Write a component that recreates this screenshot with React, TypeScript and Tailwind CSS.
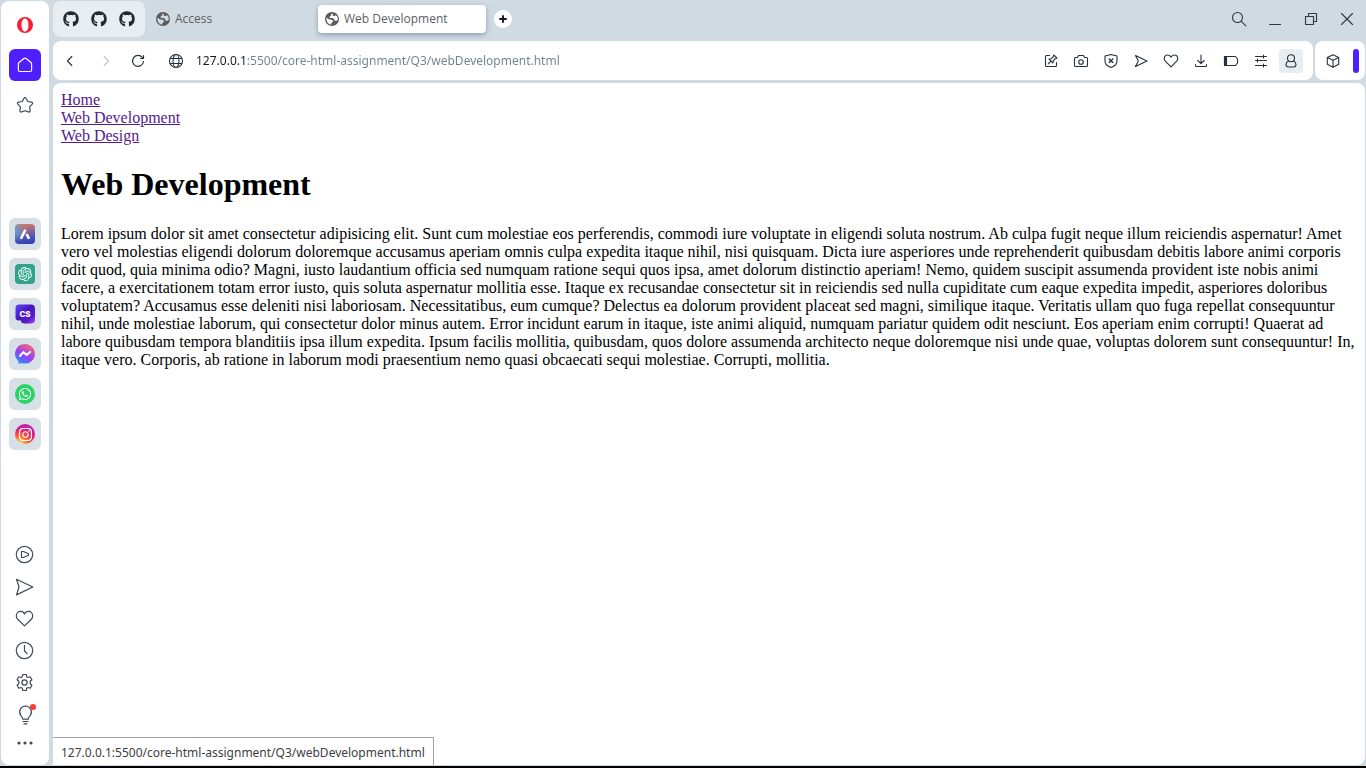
import type { ReactNode } from "react";
import { FaGithub, FaWhatsapp, FaInstagram } from "react-icons/fa";
import { SiOpenai } from "react-icons/si";

type Glyph = { size?: number; width?: number; children: ReactNode };

function Icon({ size = 16, width = 1.1, children }: Glyph) {
  return (
    <svg
      width={size}
      height={size}
      viewBox={`0 0 ${size} ${size}`}
      fill="none"
      stroke="currentColor"
      strokeWidth={width}
      strokeLinecap="round"
      strokeLinejoin="round"
      aria-hidden="true"
    >
      {children}
    </svg>
  );
}

function Earth() {
  return (
    <svg width="16" height="16" viewBox="0 0 16 16" aria-hidden="true">
      <path
        fillRule="evenodd"
        fill="#5a5b5d"
        d="M8 1a7 7 0 1 1 0 14A7 7 0 0 1 8 1ZM8.600 2.400 7 3.200v1.600l-1.300.6v1.500h3.100l1.600 1.500v1.300h2.200l1.200-1A5.700 5.700 0 0 0 11.800 3.700l-.6 1.400H9.600L8.600 4.200ZM2.400 7.200a5.700 5.700 0 0 0 4.800 6.500v-1.500l1.600-1.300V9.500L7.200 8.600H5.100L3.700 7.200Z"
      />
    </svg>
  );
}

const LINKS = ["Home", "Web Development", "Web Design"];

const ADDRESS = "127.0.0.1:5500/core-html-assignment/Q3/webDevelopment.html";

const PARAGRAPH =
  "Lorem ipsum dolor sit amet consectetur adipisicing elit. Sunt cum molestiae eos perferendis, commodi iure voluptate in eligendi soluta nostrum. Ab culpa fugit neque illum reiciendis aspernatur! Amet vero vel molestias eligendi dolorum doloremque accusamus aperiam omnis culpa expedita itaque nihil, nisi quisquam. Dicta iure asperiores unde reprehenderit quibusdam debitis labore animi corporis odit quod, quia minima odio? Magni, iusto laudantium officia sed numquam ratione sequi quos ipsa, amet dolorum distinctio aperiam! Nemo, quidem suscipit assumenda provident iste nobis animi facere, a exercitationem totam error iusto, quis soluta aspernatur mollitia esse. Itaque ex recusandae consectetur sit in reiciendis sed nulla cupiditate cum eaque expedita impedit, asperiores doloribus voluptatem? Accusamus esse deleniti nisi laboriosam. Necessitatibus, eum cumque? Delectus ea dolorum provident placeat sed magni, similique itaque. Veritatis ullam quo fuga repellat consequuntur nihil, unde molestiae laborum, qui consectetur dolor minus autem. Error incidunt earum in itaque, iste animi aliquid, numquam pariatur quidem odit nesciunt. Eos aperiam enim corrupti! Quaerat ad labore quibusdam tempora blanditiis ipsa illum expedita. Ipsum facilis mollitia, quibusdam, quos dolore assumenda architecto neque doloremque nisi unde quae, voluptas dolorem sunt consequuntur! In, itaque vero. Corporis, ab ratione in laborum modi praesentium nemo quasi obcaecati sequi molestiae. Corrupti, mollitia.";

const APPS: { name: string; art: ReactNode }[] = [
  {
    name: "Aria",
    art: (
      <span className="flex size-5 items-center justify-center rounded-sm bg-[radial-gradient(circle_at_0%_35%,#5f9fd8_0%,transparent_45%),linear-gradient(170deg,#d9805c_0%,#b0707c_25%,#4f55b4_65%,#2b3bb4_100%)]">
        <svg width="20" height="20" viewBox="0 0 20 20" fill="none" stroke="#fff" strokeWidth="2.6" strokeLinecap="round" aria-hidden="true">
          <path d="M6.300 13.800 10 6.600" />
          <path d="m12 10.800 1.600 3" />
        </svg>
      </span>
    ),
  },
  {
    name: "ChatGPT",
    art: (
      <span className="flex size-5 items-center justify-center rounded-sm bg-[#2fa488] text-white">
        <SiOpenai size={14} />
      </span>
    ),
  },
  {
    name: "ChatSonic",
    art: (
      <svg width="20" height="20" viewBox="0 0 20 20" aria-hidden="true">
        <defs>
          <linearGradient id="cs" x1="0" y1="0" x2="1" y2="1">
            <stop offset="0" stopColor="#5f45f5" />
            <stop offset="0.45" stopColor="#4a16c4" />
            <stop offset="0.75" stopColor="#5a1ac8" />
            <stop offset="1" stopColor="#b04cf5" />
          </linearGradient>
        </defs>
        <path d="M4 0.5h12a4 4 0 0 1 4 4v11a4 4 0 0 1-4 4H9.500C7 19.500 6 18.500 6 16.500H3.500a3 3 0 0 1-3-3V4a3.500 3.500 0 0 1 3.500-3.500Z" fill="url(#cs)" />
        <text x="10" y="13" textAnchor="middle" fontSize="8" fontWeight="800" fill="#fff" className="font-['Inter',sans-serif]">
          CS
        </text>
      </svg>
    ),
  },
  {
    name: "Messenger",
    art: (
      <svg width="20" height="20" viewBox="0 0 20 20" aria-hidden="true">
        <defs>
          <linearGradient id="ms" x1="0.2" y1="1" x2="0.8" y2="0">
            <stop offset="0" stopColor="#1f94ff" />
            <stop offset="0.45" stopColor="#9a3ff5" />
            <stop offset="1" stopColor="#ff6968" />
          </linearGradient>
        </defs>
        <path d="M10 0a9.800 9.800 0 1 1-3.500 18.900L3.500 20V17.200A9.800 9.800 0 0 1 10 0Z" fill="url(#ms)" />
        <path d="m5 12 3.200-3.900 3.500 2.800 3.400-3" fill="none" stroke="#fff" strokeWidth="2" strokeLinejoin="round" strokeLinecap="round" />
      </svg>
    ),
  },
  {
    name: "WhatsApp",
    art: (
      <span className="flex size-5 items-center justify-center rounded-full bg-[#2ad366] text-white">
        <FaWhatsapp size={14} />
      </span>
    ),
  },
  {
    name: "Instagram",
    art: (
      <span className="flex size-5 items-center justify-center rounded-full bg-[radial-gradient(circle_at_25%_100%,#ffd34a_5%,#fb5a2e_35%,#e8197c_60%,#8a2be8_100%)] text-white">
        <FaInstagram size={15} />
      </span>
    ),
  },
];

const TOOLS: { name: string; art: ReactNode }[] = [
  {
    name: "Easy files",
    art: (
      <Icon>
        <path d="M6.500 2.500H3.500a1 1 0 0 0-1 1v9a1 1 0 0 0 1 1h9a1 1 0 0 0 1-1V9.500" />
        <path d="m10.800 2 3.200 3.200-1.700.5-2 2-.3 2.300-4-4 2.300-.3 2-2ZM8 8l-2.800 2.800" />
      </Icon>
    ),
  },
  {
    name: "Snapshot",
    art: (
      <Icon>
        <path d="M2.500 4.500h2l1-2h5l1 2h2a1 1 0 0 1 1 1v7a1 1 0 0 1-1 1h-11a1 1 0 0 1-1-1v-7a1 1 0 0 1 1-1Z" />
        <circle cx="8" cy="9" r="2.300" />
      </Icon>
    ),
  },
  {
    name: "Ad blocker",
    art: (
      <Icon>
        <path d="M8 1.500 14 3v5c0 3-2.600 5.300-6 6.500C4.600 13.300 2 11 2 8V3Z" />
        <path d="m6.200 5.900 3.600 3.600M9.800 5.900 6.200 9.500" strokeWidth="1.400" />
      </Icon>
    ),
  },
  {
    name: "Send to My Flow",
    art: (
      <Icon>
        <path d="M2.500 2.500 14 8 2.500 13.500 5.300 8Z" />
      </Icon>
    ),
  },
  {
    name: "Add to bookmarks",
    art: (
      <Icon>
        <path d="M8 13.800 2.300 8.200a3.700 3.700 0 0 1-1-2.700C1.300 3.500 2.800 2 4.700 2 6.300 2 7.500 2.900 8 4.200 8.500 2.900 9.700 2 11.300 2c1.900 0 3.400 1.500 3.400 3.500a3.700 3.700 0 0 1-1 2.700Z" />
      </Icon>
    ),
  },
  {
    name: "Downloads",
    art: (
      <Icon>
        <path d="M8 2v8.500M4.800 7.500 8 10.700l3.200-3.200M2.500 11.500v1a1 1 0 0 0 1 1h9a1 1 0 0 0 1-1v-1" />
      </Icon>
    ),
  },
  {
    name: "Battery saver",
    art: (
      <Icon>
        <path d="M2 3.500h10.500l2 2.500v4l-2 2.500H2a.5.500 0 0 1-.500-.500V4a.5.500 0 0 1 .500-.500Z" />
        <path d="M1.500 3.500h2v9h-2Z" fill="currentColor" />
      </Icon>
    ),
  },
  {
    name: "Easy setup",
    art: (
      <Icon>
        <path d="M2.500 3.500h11M2.500 7.500h11M2.500 12.500h11M10.500 2v3M4.500 6v3M10.500 11v3" />
      </Icon>
    ),
  },
];

const SHORTCUTS: { name: string; art: ReactNode }[] = [
  {
    name: "Player",
    art: (
      <Icon size={20} width={1.200}>
        <circle cx="9.500" cy="9.500" r="8.200" />
        <path d="M6.500 6.500h2l5 2.300v1.400l-5 2.300h-2Z" />
      </Icon>
    ),
  },
  {
    name: "My Flow",
    art: (
      <Icon size={20} width={1.200}>
        <path d="M1.500 2.300 17.800 10 1.500 17.900 4 10Z" />
      </Icon>
    ),
  },
  {
    name: "Bookmarks",
    art: (
      <Icon size={20} width={1.200}>
        <path d="M9.500 16.900 2.700 10.300a4.700 4.700 0 0 1-1.400-3.400c0-2.600 1.900-4.500 4.200-4.500 1.900 0 3.400 1 4 2.700 .6-1.700 2.100-2.700 4-2.700 2.300 0 4.200 1.900 4.200 4.500a4.700 4.700 0 0 1-1.400 3.400Z" />
      </Icon>
    ),
  },
  {
    name: "History",
    art: (
      <Icon size={20} width={1.200}>
        <circle cx="9.500" cy="9.500" r="8.200" />
        <path d="M9.500 4.500V10l2.700 2.700" />
      </Icon>
    ),
  },
  {
    name: "Settings",
    art: (
      <Icon size={20} width={1.200}>
        <path d="M7.800 1.500h3.400l.5 2.300 1.300.7 2.200-.7 1.700 3-1.700 1.500v2.400l1.700 1.500-1.700 3-2.200-.7-1.300.7-.5 2.300H7.800L7.300 15.200 6 14.500l-2.200.7-1.700-3 1.700-1.500V8.300L2.100 6.800l1.700-3 2.200.7 1.300-.7Z" />
        <circle cx="9.500" cy="9.500" r="2.600" />
      </Icon>
    ),
  },
  {
    name: "Tips",
    art: (
      <span className="relative flex">
        <Icon size={20} width={1.200}>
          <path d="M7.800 14.200c0-1.700-.8-2.400-2-3.700A6 6 0 0 1 10.500 1a6 6 0 0 1 4.700 9.500c-1.200 1.300-2 2-2 3.700Z" />
          <path d="M8 16.500h5M9 18.800h3" />
        </Icon>
        <span className="absolute -top-px -right-px size-1.5 rounded-full bg-[#fa3c34]" />
      </span>
    ),
  },
];

function Sidebar() {
  return (
    <nav aria-label="Sidebar" className="flex w-12 shrink-0 flex-col items-center rounded-lg bg-white text-[#3f4a54]">
      <button aria-label="Opera menu" className="mt-2 flex size-8 items-center justify-center">
        <svg width="16" height="18" viewBox="0 0 16 18" aria-hidden="true">
          <path fillRule="evenodd" fill="#fa1e34" d="M8 1a8 8 0 0 1 0 16A8 8 0 0 1 8 1Zm0 1.400C5.900 2.400 4.500 5.200 4.500 9S5.900 15.600 8 15.600s3.500-2.800 3.500-6.600S10.100 2.400 8 2.400Z" />
        </svg>
      </button>
      <button aria-label="Home" className="mt-2 flex size-8 items-center justify-center rounded-md bg-[#4f1fff] text-white">
        <Icon size={16} width={1.200}>
          <path d="M6.900 1.500 2 5.500a1.500 1.500 0 0 0-.600 1.200V13A1.500 1.500 0 0 0 2.900 14.500h10.200a1.500 1.500 0 0 0 1.500-1.500V6.700A1.500 1.500 0 0 0 14 5.500L9.100 1.500a1.800 1.800 0 0 0-2.200 0Z" />
        </Icon>
      </button>
      <button aria-label="Speed dial" className="mt-2 flex size-8 items-center justify-center">
        <Icon size={18} width={1.200}>
          <path d="M8 2.200c.4-.9 1.600-.9 2 0l1.700 3.300 3.900.7c1 .2 1.300 1.200.6 1.900l-2.600 2.700.5 3.900c.1 1-.8 1.600-1.700 1.200L9 14.800l-3.400 1.100c-.9.4-1.800-.2-1.700-1.200l.5-3.900L1.800 8.100c-.7-.7-.4-1.700.6-1.900l3.900-.7Z" />
        </Icon>
      </button>
      <ul className="mt-24.25 flex flex-col gap-2">
        {APPS.map((app) => (
          <li key={app.name}>
            <button aria-label={app.name} className="flex size-8 items-center justify-center rounded-md bg-[#d6e0e6]">
              {app.art}
            </button>
          </li>
        ))}
      </ul>
      <ul className="mt-auto flex flex-col">
        {SHORTCUTS.map((item) => (
          <li key={item.name}>
            <button aria-label={item.name} className="flex size-8 items-center justify-center">
              {item.art}
            </button>
          </li>
        ))}
      </ul>
      <button aria-label="Sidebar setup" className="mb-2.5 flex h-6 w-8 items-center justify-center">
        <svg width="16" height="4" viewBox="0 0 16 4" fill="currentColor" aria-hidden="true">
          <circle cx="2" cy="2" r="1.600" />
          <circle cx="8" cy="2" r="1.600" />
          <circle cx="14" cy="2" r="1.600" />
        </svg>
      </button>
    </nav>
  );
}

function TabStrip() {
  return (
    <header className="flex h-9 items-center text-[#5a5e62]">
      <div className="flex h-9 w-23 items-center justify-center gap-3 rounded-lg bg-[#e8edf1] text-[#24292f]">
        {[1, 2, 3].map((tab) => (
          <button key={tab} aria-label={`GitHub tab ${tab}`}>
            <FaGithub size={16} />
          </button>
        ))}
      </div>
      <button className="ml-1 flex h-7 w-42 items-center gap-1 pl-1.5 text-xs">
        <Earth />
        Access
      </button>
      <button className="ml-px flex h-7 w-42 items-center gap-1 rounded-sm bg-white pl-1.5 text-xs shadow-[0_2px_5px_#64788c99]">
        <Earth />
        Web Development
      </button>
      <button aria-label="New tab" className="ml-2 flex size-4.5 items-center justify-center rounded-full bg-white text-[#111820]">
        <Icon size={8} width={1.900}>
          <path d="M4 1v6M1 4h6" />
        </Icon>
      </button>
      <div className="ml-auto flex text-[#33383d]">
        <button aria-label="Search tabs" className="flex size-9 items-center justify-center">
          <Icon>
            <circle cx="6.500" cy="6.500" r="5" />
            <path d="m10.300 10.300 4.500 4.500" />
          </Icon>
        </button>
        <button aria-label="Minimize" className="flex size-9 items-center justify-center">
          <Icon>
            <path d="M2.500 13.500h11" />
          </Icon>
        </button>
        <button aria-label="Restore" className="flex size-9 items-center justify-center">
          <Icon>
            <path d="M2.500 5.500h8v8h-8ZM5.500 5.500v-3h8v8h-3" />
          </Icon>
        </button>
        <button aria-label="Close" className="flex size-9 items-center justify-center">
          <Icon>
            <path d="m2.500 2.500 11 11M13.500 2.500l-11 11" />
          </Icon>
        </button>
      </div>
    </header>
  );
}

function AddressBar() {
  return (
    <div className="mt-1 flex h-9.75 gap-0.5 text-[#27313b]">
      <div className="flex min-w-0 flex-1 items-center rounded-lg bg-white pr-2.5 pl-1.75">
        <button aria-label="Back" className="flex size-5 items-center justify-center">
          <Icon>
            <path d="M9.800 3.500 5.500 8l4.300 4.500" />
          </Icon>
        </button>
        <button aria-label="Forward" disabled className="ml-4 flex size-5 items-center justify-center text-[#c3c7cb]">
          <Icon>
            <path d="M6.200 3.500 10.500 8l-4.300 4.500" />
          </Icon>
        </button>
        <button aria-label="Reload" className="ml-3 flex size-5 items-center justify-center">
          <Icon width={1.200}>
            <path d="M12.400 4.500A5.500 5.500 0 1 0 13.500 8.500" />
            <path d="M13.500 2.500v3H10.500" />
          </Icon>
        </button>
        <button aria-label="Site information" className="ml-4.5 flex size-5 items-center justify-center">
          <Icon>
            <circle cx="8" cy="8" r="6.500" />
            <ellipse cx="8" cy="8" rx="3" ry="6.500" />
            <path d="M2.300 5.500h11.400M2.300 10.500h11.400" />
          </Icon>
        </button>
        <input
          type="text"
          aria-label="Address"
          defaultValue={ADDRESS}
          className="ml-2.5 h-6 min-w-0 flex-1 bg-[linear-gradient(to_right,#171b1f_50px,#70818f_50px)] bg-clip-text font-['Noto_Sans',sans-serif] text-xs text-transparent caret-black outline-none"
        />
        <div className="flex items-center gap-1.5">
          {TOOLS.map((tool) => (
            <button key={tool.name} aria-label={tool.name} className="flex size-6 items-center justify-center">
              {tool.art}
            </button>
          ))}
          <button aria-label="Profile" className="flex size-6 items-center justify-center rounded-sm bg-[#e8edf1]">
            <Icon>
              <circle cx="8" cy="5.200" r="3.500" />
              <path d="M5.500 7.900C3.900 8.700 3 10 3 11.500c0 1.400.800 2.500 2.500 2.500h5c1.700 0 2.500-1.100 2.500-2.500 0-1.500-.900-2.800-2.500-3.600" />
            </Icon>
          </button>
        </div>
      </div>
      <div className="flex w-12.5 items-center justify-between rounded-lg bg-white pr-1.5 pl-2.5">
        <button aria-label="Extensions" className="flex size-4 items-center justify-center">
          <Icon>
            <path d="m8 1.800 5.700 2.700v6.800L8 14.200l-5.700-2.900V4.500ZM2.300 4.500 8 7.300l5.700-2.800M8 7.300v6.900" />
          </Icon>
        </button>
        <button aria-label="Assistant panel" className="h-6 w-1.5 rounded-full bg-[#4f1fff]" />
      </div>
    </div>
  );
}

export default function App() {
  return (
    <div className="flex h-screen flex-col bg-black pb-0.5 font-['Open_Sans','Noto_Sans',sans-serif]">
      <div className="flex min-h-0 flex-1 gap-1 bg-[#d0dae3] p-px">
        <Sidebar />
        <div className="flex min-w-0 flex-1 flex-col">
          <TabStrip />
          <AddressBar />
          <main className="relative mt-0.75 flex-1 overflow-hidden rounded-lg rounded-bl-none bg-white px-2 pt-2 font-['Liberation_Serif',serif] text-base leading-4.5 text-black">
            <nav aria-label="Pages" className="flex flex-col items-start">
              {LINKS.map((link) => (
                <a key={link} href="#" className="text-[#551a8b] underline">
                  {link}
                </a>
              ))}
            </nav>
            <h1 className="mt-5 mb-5.5 text-[32px] leading-9.5 font-bold">Web Development</h1>
            <p>{PARAGRAPH}</p>
            <div
              role="status"
              className="absolute bottom-0 left-0 flex h-7 items-center border-t border-r border-[#a0a4a8] bg-white px-2 pt-0.5 font-['Noto_Sans',sans-serif] text-xs text-[#3c4043]"
            >
              {ADDRESS}
            </div>
          </main>
        </div>
      </div>
    </div>
  );
}
